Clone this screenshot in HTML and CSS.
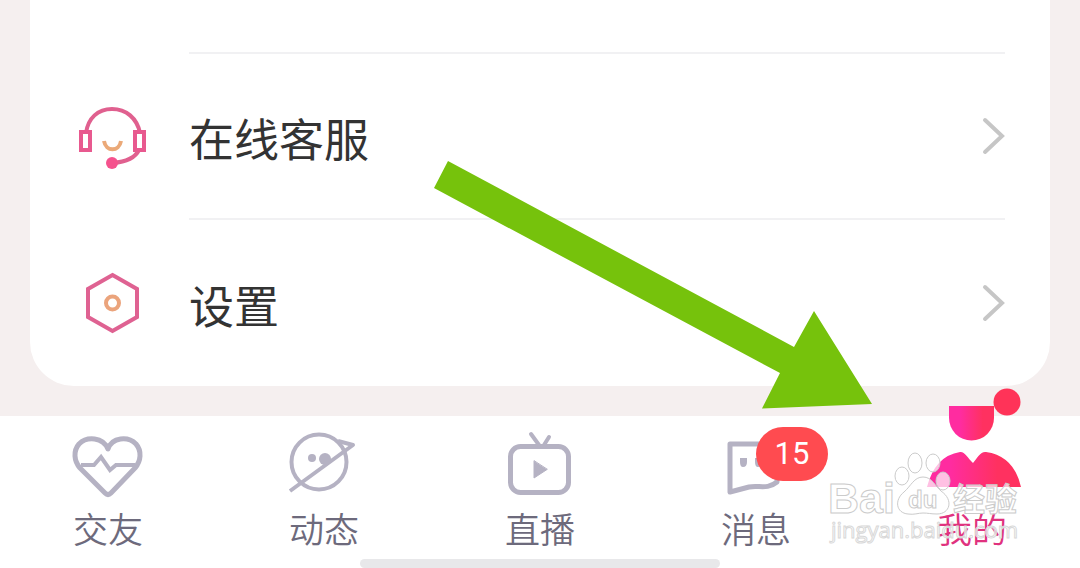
FILE: index.html
```html
<!DOCTYPE html>
<html lang="zh-CN">
<head>
<meta charset="utf-8">
<meta name="viewport" content="width=device-width, initial-scale=1">
<title>我的</title>
<link rel="stylesheet" href="styles.css">
</head>
<body>
<main class="card">
  <div class="card-top"></div>
  <a class="row divided" href="#service">
    <svg class="row-icon" viewBox="0 0 76 76" fill="none" aria-hidden="true">
      <path d="M11 34C13 19 23 10 37 10S62 19 65 34M64 51C60 59 50 63 38 64" stroke="#e0608f" stroke-width="4"/>
      <path d="M6 33h9v18H6zM60 33h9v18h-9z" stroke="#e8598f" stroke-width="4"/>
      <circle cx="37" cy="64" r="6" fill="#f5528d"/>
      <path d="M29 42c2 11 15 11 17 0" stroke="#eba978" stroke-width="4"/>
    </svg>
    <span class="row-body">
      <span class="row-label">在线客服</span>
      <svg class="chevron" viewBox="0 0 24 40" fill="none" aria-hidden="true"><path d="M4 4l17 16L4 36" stroke="#c6c6c6" stroke-width="4" stroke-linecap="round"/></svg>
    </span>
  </a>
  <a class="row" href="#settings">
    <svg class="row-icon" viewBox="0 0 76 76" fill="none" aria-hidden="true">
      <path d="M37.500 10L62 24v28L37.500 66 13 52V24z" stroke="#df6292" stroke-width="4"/>
      <circle cx="37.500" cy="38" r="6.500" stroke="#eba47c" stroke-width="4"/>
    </svg>
    <span class="row-body">
      <span class="row-label">设置</span>
      <svg class="chevron" viewBox="0 0 24 40" fill="none" aria-hidden="true"><path d="M4 4l17 16L4 36" stroke="#c6c6c6" stroke-width="4" stroke-linecap="round"/></svg>
    </span>
  </a>
</main>

<nav class="tabs">
  <a class="tab" href="#friends">
    <svg class="tab-icon" viewBox="0 0 100 84" fill="none" stroke="#b5b2c3" stroke-width="5" stroke-linejoin="round" aria-hidden="true">
      <path d="M50 33C45 21 29 20 21 28c-6 7-5 17 1 24l25 25q3 3 6 0l24-25c6-7 7-17 1-24-8-8-24-7-28 5z"/>
      <path d="M23 49h13l7-8 9 13 6-5h19" stroke-width="4" stroke-linejoin="miter"/>
    </svg>
    <span class="tab-label">交友</span>
  </a>
  <a class="tab" href="#moments">
    <svg class="tab-icon" viewBox="0 0 100 84" fill="none" stroke="#b5b2c3" stroke-width="4" aria-hidden="true">
      <circle cx="45" cy="46" r="27.500"/>
      <path d="M16 75L79 29 64 25" stroke-linejoin="round"/>
      <circle cx="38" cy="42" r="4" fill="#b5b2c3" stroke="none"/>
      <circle cx="51" cy="43" r="6" fill="#b5b2c3" stroke="none"/>
    </svg>
    <span class="tab-label">动态</span>
  </a>
  <a class="tab" href="#live">
    <svg class="tab-icon" viewBox="0 0 100 84" fill="none" stroke="#b5b2c3" stroke-width="5" stroke-linecap="round" aria-hidden="true">
      <rect x="20.500" y="30.500" width="58" height="46" rx="10"/>
      <path d="M41 18l8 11M59 21l-5 8" stroke-width="4"/>
      <path d="M44 45v17l13-8.500z" fill="#b5b2c3" stroke-width="1"/>
    </svg>
    <span class="tab-label">直播</span>
  </a>
  <a class="tab" href="#messages">
    <svg class="tab-icon" viewBox="0 0 100 84" fill="none" stroke="#b5b2c3" stroke-width="5" stroke-linejoin="round" aria-hidden="true">
      <path d="M24 28h47v38C61 74 53 69 43 71L24 76z"/>
      <path d="M34 42h7v4q0 5-4 5-3 0-3-5zM49 42h7v4q0 5-4 5-3 0-3-5z" fill="#b5b2c3" stroke="none"/>
    </svg>
    <span class="tab-label">消息</span>
    <span class="badge">15</span>
  </a>
  <a class="tab active" href="#me" aria-current="page">
    <svg class="tab-icon" viewBox="0 0 100 84" aria-hidden="true">
      <defs>
        <linearGradient id="pink"><stop offset=".25" stop-color="#ff2ca0"/><stop offset=".75" stop-color="#ff3160"/></linearGradient>
      </defs>
      <path d="M27-10h45v12a22 22 0 0 1-45 0z" fill="url(#pink)"/>
      <path d="M5 71Q13 40 38 36c4-1 8 6 13 11 4-5 8-12 13-11Q92 40 99 71z" fill="url(#pink)"/>
      <circle cx="85" cy="-14" r="13.500" fill="#ff3358"/>
    </svg>
    <span class="tab-label">我的</span>
  </a>
  <span class="home-bar"></span>
</nav>

<svg class="arrow" viewBox="0 0 440 250" aria-hidden="true"><path d="M15 1L361 187 381 151 439 244 329 248.500 347 213 1 28z" fill="#76c20c"/></svg>

<svg class="watermark" viewBox="0 0 210 100" aria-hidden="true">
  <ellipse cx="77" cy="24" rx="7" ry="9"/>
  <ellipse cx="90" cy="11" rx="7" ry="10"/>
  <ellipse cx="108" cy="11" rx="7" ry="9"/>
  <ellipse cx="118" cy="29" rx="7" ry="9"/>
  <path d="M98 25c9 0 12 9 18 14 13 9 9 23-4 23-6 0-9-1-14-1s-9 2-15 1c-12-1-14-14-4-22 7-6 10-15 19-15z"/>
  <text class="wm-brand" x="3" y="61">Bai</text>
  <text class="wm-du" x="83" y="56">du</text>
  <text class="wm-cjk" x="128" y="59">经验</text>
  <text class="wm-url" x="6" y="86">jingyan.baidu.com</text>
</svg>
</body>
</html>
```
FILE: styles.css
```css
* {
  box-sizing: border-box;
}

body {
  position: relative;
  margin: 0;
  background: #f5efef;
  font-family: "Noto Sans CJK SC", sans-serif;
  overflow: hidden;
}

a {
  color: inherit;
  text-decoration: none;
}

svg {
  display: block;
  flex: none;
}

.card {
  margin: 0 30px 30px;
  padding: 0 45px;
  background: #fff;
  border-radius: 0 0 44px 44px;
}

.card-top {
  height: 54px;
  margin-left: 114px;
  border-bottom: 2px solid #f1f1f3;
}

.row {
  display: flex;
  align-items: center;
  gap: 38px;
}

.row-icon {
  width: 76px;
  height: 76px;
}

.row-body {
  flex: 1;
  display: flex;
  align-items: center;
  justify-content: space-between;
  height: 166px;
}

.divided .row-body {
  border-bottom: 2px solid #f1f1f3;
}

.row-label {
  padding-top: 4px;
  color: #333;
  font-size: 45px;
  line-height: 64px;
}

.chevron {
  width: 24px;
  height: 40px;
}

.tabs {
  position: relative;
  display: grid;
  grid-template-columns: repeat(5, 1fr);
  height: 152px;
  background: #fff;
}

.tab {
  position: relative;
  display: flex;
  flex-direction: column;
  align-items: center;
  color: #6d6a7c;
}

.tab-icon {
  width: 100px;
  height: 84px;
  overflow: visible;
}

.tab-label {
  font-size: 35px;
  font-weight: 350;
  line-height: 56px;
}

.active {
  color: #e0327e;
}

.badge {
  position: absolute;
  top: 11px;
  left: 50%;
  width: 72px;
  border-radius: 27px;
  background: #ff4b50;
  color: #fff;
  font: 31px/54px Roboto, sans-serif;
  text-align: center;
}

.home-bar {
  position: absolute;
  bottom: 0;
  left: 50%;
  width: 360px;
  height: 9px;
  margin-left: -180px;
  border-radius: 5px;
  background: #e8e8ea;
}

.arrow {
  position: absolute;
  top: 160px;
  left: 433px;
  width: 440px;
  height: 250px;
}

.watermark {
  position: absolute;
  right: 45px;
  bottom: 16px;
  width: 210px;
  height: 100px;
  fill: #fff;
  fill-opacity: 0.7;
  stroke: #cbcbcb;
  stroke-width: 1;
}

.wm-brand {
  font: bold 43px "Liberation Sans", sans-serif;
}

.wm-du {
  font: bold 24px "Liberation Sans", sans-serif;
}

.wm-cjk {
  font: bold 32px "Noto Sans CJK SC", sans-serif;
}

.wm-url {
  font: 22px "Open Sans", sans-serif;
  stroke: #d8d8d8;
}
```
